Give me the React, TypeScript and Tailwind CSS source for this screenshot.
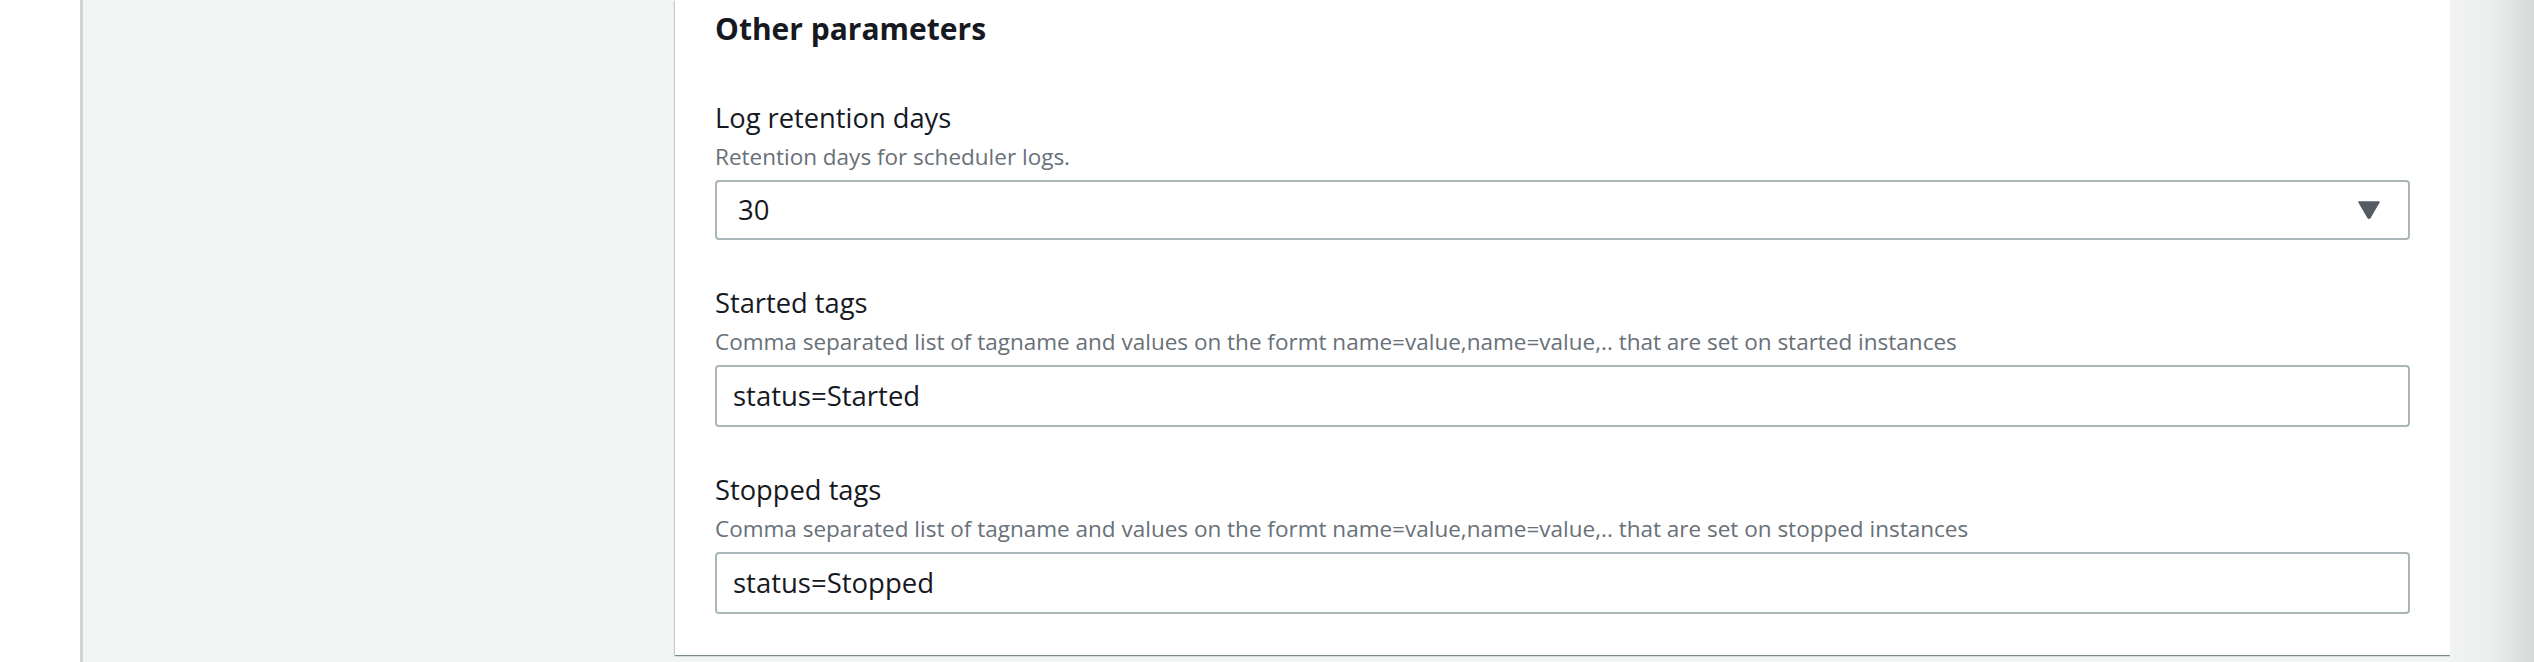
import React from 'react';

const font = { fontFamily: '"Open Sans", Roboto, sans-serif' };

function Field({ label, hint, children }: { label: string; hint: string; children: React.ReactNode }) {
    return (
        <div className="flex flex-col">
            <div className="text-[27.3px] leading-[32px] text-[#16191f]">{label}</div>
            <div className="mt-[9px] text-[22.5px] leading-[28px] text-[#687078]">{hint}</div>
            <div className="mt-[9px]">{children}</div>
        </div>
    );
}

function TextBox({ value }: { value: string }) {
    return (
        <div className="h-[62px] rounded-[4px] border-2 border-[#aab7b8] bg-white flex items-center px-[16px] text-[27.5px] text-[#16191f]">
            {value}
        </div>
    );
}

function SelectBox({ value }: { value: string }) {
    return (
        <div className="h-[60px] rounded-[4px] border-2 border-[#aab7b8] bg-white flex items-center justify-between pl-[21px] pr-[28px] text-[27.5px] text-[#16191f]">
            <span>{value}</span>
            <svg width="22" height="18" viewBox="0 0 22 18">
                <path d="M1 1 H21 L12 16.5 Q11 18 10 16.5 Z" fill="#545b64" stroke="#545b64" strokeWidth="1.5" strokeLinejoin="round" />
            </svg>
        </div>
    );
}

export default function App() {
    return (
        <div className="flex h-[662px] w-[2534px] overflow-hidden bg-white" style={font}>
            <div className="w-[80px] shrink-0 bg-white" />
            <div className="flex flex-1 bg-[#f2f3f3] border-l-[3px] border-[#cfd4d4]">
                <div className="w-[592px] shrink-0" />
                <div className="w-[1775px] shrink-0 h-[655px] bg-white px-[40px] pt-[11px] shadow-[0_1px_1px_0_rgba(0,28,36,0.3),1px_1px_1px_0_rgba(0,28,36,0.15),-1px_1px_1px_0_rgba(0,28,36,0.15)]">
                    <h2 className="text-[30px] leading-[36px] font-bold text-[#16191f]">Other parameters</h2>
                    <div className="mt-[55px] flex flex-col gap-[47px]">
                        <Field label="Log retention days" hint="Retention days for scheduler logs.">
                            <SelectBox value="30" />
                        </Field>
                        <Field
                            label="Started tags"
                            hint="Comma separated list of tagname and values on the formt name=value,name=value,.. that are set on started instances"
                        >
                            <TextBox value="status=Started" />
                        </Field>
                        <Field
                            label="Stopped tags"
                            hint="Comma separated list of tagname and values on the formt name=value,name=value,.. that are set on stopped instances"
                        >
                            <TextBox value="status=Stopped" />
                        </Field>
                    </div>
                </div>
                <div className="flex-1 bg-gradient-to-r from-[#f2f3f3] via-[#eceded] to-[#d6d8d8]" />
            </div>
        </div>
    );
}
